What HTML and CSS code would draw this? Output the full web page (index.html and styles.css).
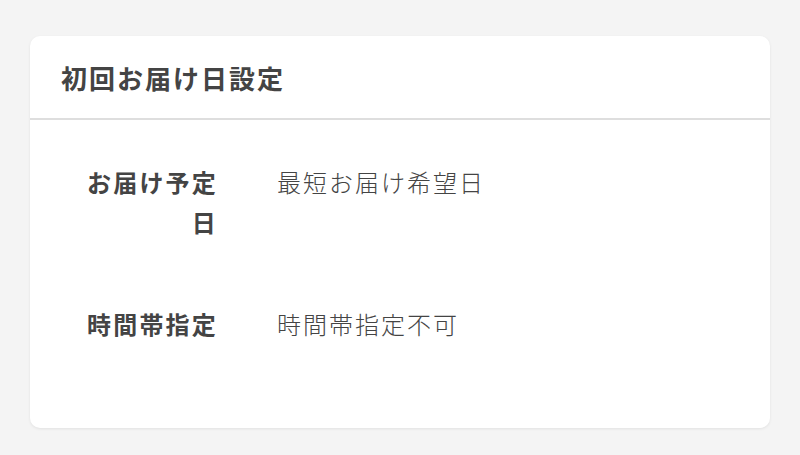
FILE: index.html
```html
<!DOCTYPE html>
<html lang="ja">
<head>
  <meta charset="UTF-8">
  <meta name="viewport" content="width=device-width, initial-scale=1.0">
  <title>初回お届け日設定</title>
  <link rel="stylesheet" href="styles.css">
</head>
<body>
  <div class="card">
    <div class="card-header">
      <h2>初回お届け日設定</h2>
    </div>
    <div class="card-body">
      <dl class="setting-row">
        <dt>お届け予定日</dt>
        <dd>最短お届け希望日</dd>
      </dl>
      <dl class="setting-row">
        <dt>時間帯指定</dt>
        <dd>時間帯指定不可</dd>
      </dl>
    </div>
  </div>
</body>
</html>
```

FILE: styles.css
```css
body {
  margin: 0;
  padding: 36px 30px;
  background-color: #f4f4f4;
  font-family: "Noto Sans CJK JP", "Noto Sans", sans-serif;
  color: #444;
}
.card {
  background: #fff;
  border-radius: 10px;
  box-shadow: 0 1px 3px rgba(0, 0, 0, 0.08);
  height: 392px;
  box-sizing: border-box;
}
.card-header {
  height: 82px;
  border-bottom: 2px solid #dedede;
  display: flex;
  align-items: center;
  padding: 0 31px;
}
.card-header h2 {
  margin: 0;
  font-size: 26px;
  letter-spacing: 2px;
  font-weight: bold;
}
.card-body {
  padding: 42px 0 0 55px;
}
.setting-row {
  display: grid;
  grid-template-columns: 133px 1fr;
  column-gap: 59px;
  margin: 0 0 62px;
  font-size: 24px;
  line-height: 40px;
  letter-spacing: 2px;
}
.setting-row dt {
  font-weight: bold;
  text-align: right;
  margin: 0;
  letter-spacing: 2.2px;
}
.setting-row dd {
  margin: 0;
  font-weight: 300;
}
```
